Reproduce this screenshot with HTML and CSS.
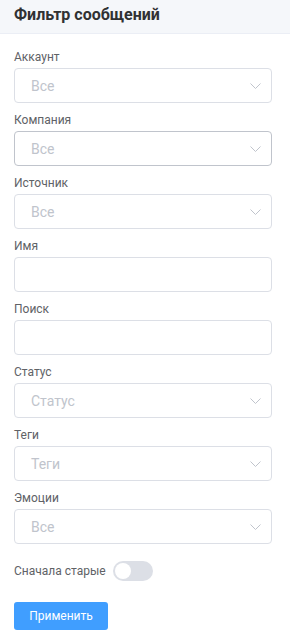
FILE: index.html
```html
<!DOCTYPE html>
<html lang="ru">
<head>
    <meta charset="UTF-8">
    <meta name="viewport" content="width=device-width, initial-scale=1.0">
    <link rel="stylesheet" href="styles.css">
    <title>Фильтр сообщений</title>
</head>
<body>
    <div class="panel">
        <div class="panel-header">Фильтр сообщений</div>
        <form class="filter-form">
            <div class="field">
                <label class="field-label">Аккаунт</label>
                <div class="select">
                    <span class="placeholder">Все</span>
                    <svg class="chevron" width="11" height="6" viewBox="0 0 11 6"><path d="M0.5 0.5 L5.5 5.5 L10.5 0.5" fill="none" stroke="#c0c4cc" stroke-width="1"/></svg>
                </div>
            </div>
            <div class="field">
                <label class="field-label">Компания</label>
                <div class="select hover">
                    <span class="placeholder">Все</span>
                    <svg class="chevron" width="11" height="6" viewBox="0 0 11 6"><path d="M0.5 0.5 L5.5 5.5 L10.5 0.5" fill="none" stroke="#c0c4cc" stroke-width="1"/></svg>
                </div>
            </div>
            <div class="field">
                <label class="field-label">Источник</label>
                <div class="select">
                    <span class="placeholder">Все</span>
                    <svg class="chevron" width="11" height="6" viewBox="0 0 11 6"><path d="M0.5 0.5 L5.5 5.5 L10.5 0.5" fill="none" stroke="#c0c4cc" stroke-width="1"/></svg>
                </div>
            </div>
            <div class="field">
                <label class="field-label">Имя</label>
                <input class="text-input" type="text">
            </div>
            <div class="field">
                <label class="field-label">Поиск</label>
                <input class="text-input" type="text">
            </div>
            <div class="field">
                <label class="field-label">Статус</label>
                <div class="select">
                    <span class="placeholder">Статус</span>
                    <svg class="chevron" width="11" height="6" viewBox="0 0 11 6"><path d="M0.5 0.5 L5.5 5.5 L10.5 0.5" fill="none" stroke="#c0c4cc" stroke-width="1"/></svg>
                </div>
            </div>
            <div class="field">
                <label class="field-label">Теги</label>
                <div class="select">
                    <span class="placeholder">Теги</span>
                    <svg class="chevron" width="11" height="6" viewBox="0 0 11 6"><path d="M0.5 0.5 L5.5 5.5 L10.5 0.5" fill="none" stroke="#c0c4cc" stroke-width="1"/></svg>
                </div>
            </div>
            <div class="field">
                <label class="field-label">Эмоции</label>
                <div class="select">
                    <span class="placeholder">Все</span>
                    <svg class="chevron" width="11" height="6" viewBox="0 0 11 6"><path d="M0.5 0.5 L5.5 5.5 L10.5 0.5" fill="none" stroke="#c0c4cc" stroke-width="1"/></svg>
                </div>
            </div>
            <div class="switch-row">
                <span class="switch-label">Сначала старые</span>
                <span class="switch"><span class="switch-knob"></span></span>
            </div>
            <button class="btn-primary" type="button">Применить</button>
        </form>
    </div>
</body>
</html>
```

FILE: styles.css
```css
* {
    box-sizing: border-box;
    font-family: Roboto, "Liberation Sans", sans-serif;
}

body {
    margin: 0;
    background-color: #ffffff;
    color: #606266;
}

.panel {
    width: 290px;
}

.panel-header {
    height: 34px;
    padding: 4px 14px 0;
    background-color: #f5f7fa;
    border-bottom: 1px solid #ebeef5;
    font-size: 16px;
    font-weight: bold;
    line-height: 22px;
    color: #303133;
}

.filter-form {
    display: flex;
    flex-direction: column;
    padding: 15px 18px 0 14px;
}

.field {
    display: flex;
    flex-direction: column;
    margin-bottom: 9px;
}

.field-label {
    font-size: 12px;
    line-height: 16px;
    margin-bottom: 3px;
    color: #606266;
}

.select,
.text-input {
    height: 35px;
    width: 258px;
    border: 1px solid #dcdfe6;
    border-radius: 4px;
    background-color: #ffffff;
}

.select {
    display: flex;
    align-items: center;
    justify-content: space-between;
    padding: 0 10px 0 16px;
}

.select.hover {
    border-color: #c0c4cc;
}

.placeholder {
    font-size: 14px;
    color: #c0c4cc;
}

.chevron {
    margin-top: 1px;
}

.text-input {
    padding: 0 15px;
    font-size: 14px;
    outline: none;
}

.switch-row {
    display: flex;
    align-items: center;
    gap: 7px;
    margin-top: 8px;
}

.switch-label {
    font-size: 12px;
    color: #606266;
}

.switch {
    display: flex;
    align-items: center;
    width: 40px;
    height: 20px;
    padding: 0 2px;
    border-radius: 10px;
    background-color: #dcdfe6;
}

.switch-knob {
    width: 16px;
    height: 16px;
    border-radius: 50%;
    background-color: #ffffff;
}

.btn-primary {
    align-self: flex-start;
    margin-top: 21px;
    width: 94px;
    height: 28px;
    border: none;
    border-radius: 3px;
    background-color: #409eff;
    color: #ffffff;
    font-size: 12px;
}
```
